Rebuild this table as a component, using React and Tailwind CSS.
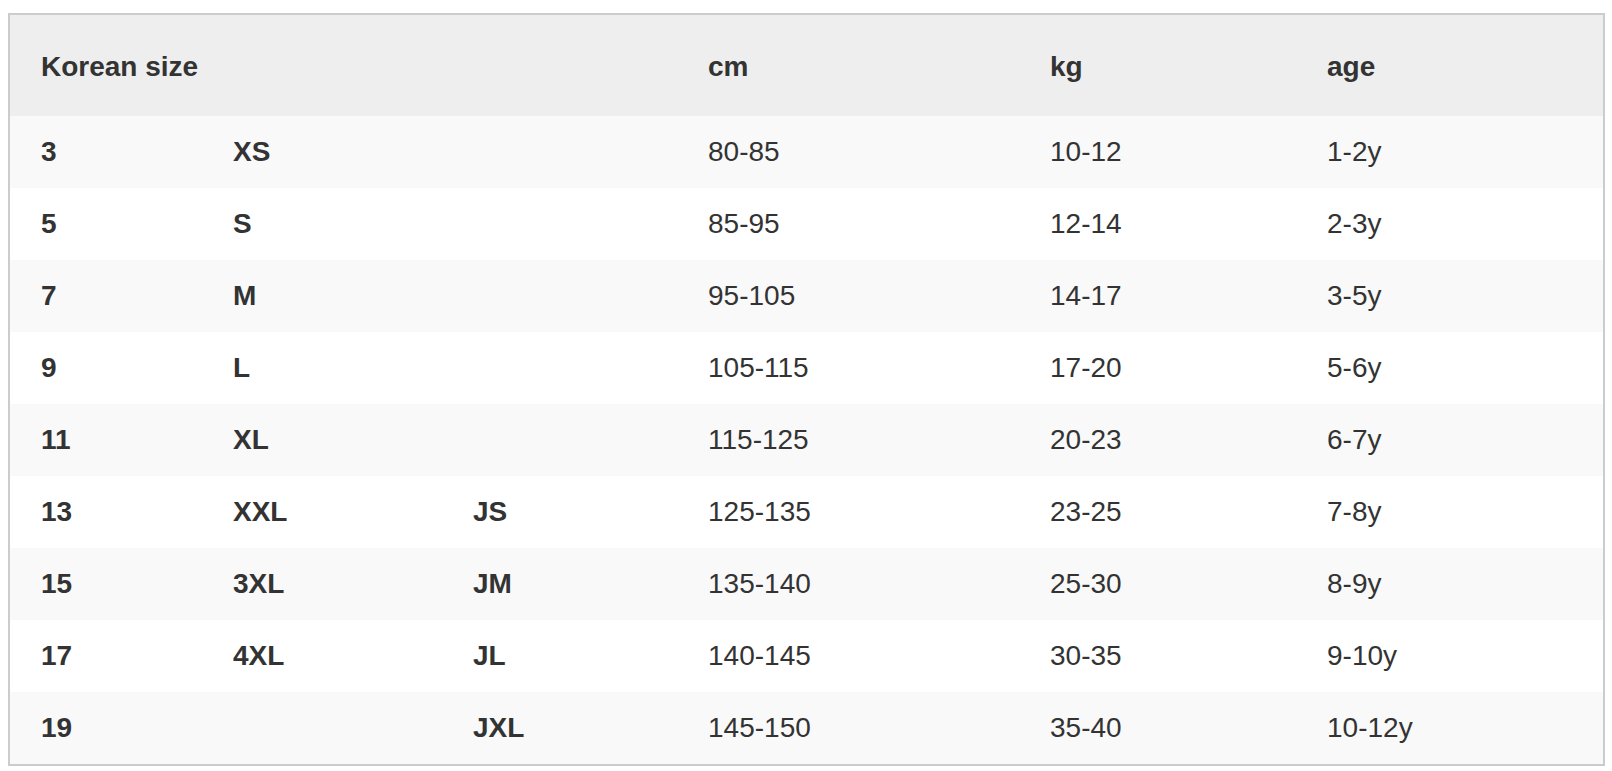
export default function App() {
  const rows = [
    ["3", "XS", "", "80-85", "10-12", "1-2y"],
    ["5", "S", "", "85-95", "12-14", "2-3y"],
    ["7", "M", "", "95-105", "14-17", "3-5y"],
    ["9", "L", "", "105-115", "17-20", "5-6y"],
    ["11", "XL", "", "115-125", "20-23", "6-7y"],
    ["13", "XXL", "JS", "125-135", "23-25", "7-8y"],
    ["15", "3XL", "JM", "135-140", "25-30", "8-9y"],
    ["17", "4XL", "JL", "140-145", "30-35", "9-10y"],
    ["19", "", "JXL", "145-150", "35-40", "10-12y"],
  ];
  return (
    <div className="bg-white min-h-screen pl-[8px] pr-[7px] pt-[13px] font-['Liberation_Sans',Arial,sans-serif] text-[#333] text-[28px]">
      <div className="border-2 border-[#cccccc]">
        <table className="w-full table-fixed border-collapse">
          <colgroup>
            <col className="w-[192px]" />
            <col className="w-[240px]" />
            <col className="w-[235px]" />
            <col className="w-[342px]" />
            <col className="w-[277px]" />
            <col />
          </colgroup>
          <thead>
            <tr className="bg-[#eeeeee] h-[101px]">
              <th colSpan={3} className="text-left font-bold pl-[31px] pt-[3px] p-0">Korean size</th>
              <th className="text-left font-bold pl-[31px] pt-[3px] p-0">cm</th>
              <th className="text-left font-bold pl-[31px] pt-[3px] p-0">kg</th>
              <th className="text-left font-bold pl-[31px] pt-[3px] p-0">age</th>
            </tr>
          </thead>
          <tbody>
            {rows.map((r, i) => (
              <tr key={i} className={i % 2 === 0 ? "bg-[#f9f9f9] h-[72px]" : "bg-white h-[72px]"}>
                {r.map((c, j) => (
                  <td key={j} className={j < 3 ? "font-bold pl-[31px] p-0" : "font-normal pl-[31px] p-0"}>
                    {c}
                  </td>
                ))}
              </tr>
            ))}
          </tbody>
        </table>
      </div>
    </div>
  );
}
